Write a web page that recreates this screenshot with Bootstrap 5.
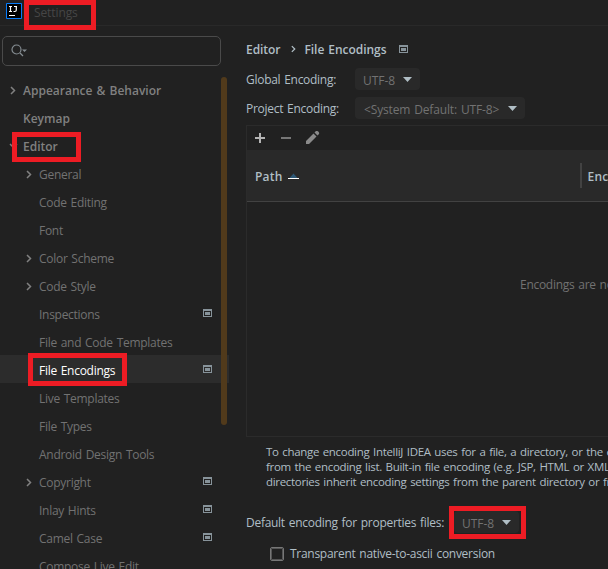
<!DOCTYPE html>
<html lang="en">
<head>
<meta charset="utf-8">
<meta name="viewport" content="width=device-width, initial-scale=1">
<title>Settings</title>
<link href="https://cdn.jsdelivr.net/npm/bootstrap@5.3.0/dist/css/bootstrap.min.css" rel="stylesheet">
<style>
html,body{height:100%;overflow:hidden}
body{background:#212121;color:#b0bec5;font:12px/16px "Open Sans","Noto Sans",sans-serif;letter-spacing:-.28px;word-spacing:1px;white-space:nowrap}
svg{display:block;flex:none}
.window{width:608px;height:569px;overflow:hidden}
.titlebar{height:26px;border-bottom:1px solid #292929;color:#464646;padding-left:6px}
.titlebar svg{margin-top:-3px}
.titlebar span{margin-left:12px;letter-spacing:-.1px}
.sidebar{width:229px;flex:none;padding-top:10px}
.search{width:219px;height:30px;margin-left:2px;border:1px solid #4a4a4a;border-radius:5px;padding-left:8px}
.tree{margin-top:9px;color:#727272}
.tree-row{height:28px;padding-right:17px}
.tree-row span{padding-top:3px}
.lvl1{padding-left:9px;font-weight:600;letter-spacing:0;color:#808080}
.lvl2{padding-left:25px}
.tree-row .arrow{width:14px;flex:none;color:#808080;padding:2px 0 0 1px}
.tree-row.selected{background:#2c2c2c;color:#fff}
.scroll-thumb{left:221px;top:77px;width:6px;height:348px;border-radius:3px;background:#513a1b}
.content{padding-left:17px;min-width:0}
.crumbs{height:46px;font-weight:600;letter-spacing:-.05px;margin-bottom:-4px}
.crumbs span{padding-top:2px}
.crumbs .sep{margin:0 8px 0 11px}
.crumbs .scope{margin-left:13px}
.combo{height:22px;background:#292929;border-radius:4px;color:#727272;padding:0 8px;flex:none;letter-spacing:-.05px}
.combo span{padding-top:3px}
.combo-sm{width:65px}
.combo-lg{width:170px;padding-left:9px;letter-spacing:-.15px}
.field{height:22px}
.field-label{width:109px;padding-top:2px}
.encodings{width:500px;height:312px;margin-top:6px;border:1px solid #2b2b2b}
.tools{height:24px;padding-left:8px}
.tools .minus{margin-left:16px}
.tools .pencil{margin-left:15px}
.thead-row{height:52px;background:#292929;border-bottom:1px solid #424242;font-weight:600;letter-spacing:.2px;padding-left:8px}
.thead-row span{padding-top:3px}
.sort{margin:0 0 0 5px}
.divider{width:2px;height:25px;background:#424242;margin:0 6px 0 281px}
.empty{padding:75px 0 0 273px;color:#727272}
.help{margin:7px 0 22px 20px;font-size:11.5px;line-height:15px;letter-spacing:-.32px}
.prop-label{width:208px;padding-top:2px}
.native{margin:13px 0 0 24px}
.check{width:14px;height:14px;border:1px solid #777;outline:1px solid #555;outline-offset:-2px;border-radius:2px;margin-right:6px}
.marker{border:5px solid #ed1c24;pointer-events:none}
.m1{left:24px;top:0;width:72px;height:30px}
.m2{left:12px;top:132px;width:69px;height:30px}
.m3{left:28px;top:353px;width:99px;height:33px}
.m4{left:449px;top:506px;width:77px;height:33px}
</style>
<script src="https://cdn.jsdelivr.net/npm/bootstrap@5.3.0/dist/js/bootstrap.bundle.min.js"></script>
</head>
<body>
<svg class="d-none">
<symbol id="right" viewBox="0 0 6 9"><path d="M1 1l3.5 3.5L1 8" fill="none" stroke="currentColor" stroke-width="1.5"/></symbol>
<symbol id="down" viewBox="0 0 9 6"><path d="M1 1l3.5 3.5L8 1" fill="none" stroke="currentColor" stroke-width="1.5"/></symbol>
<symbol id="proj" viewBox="0 0 9 8"><path d="M0 0h9v8H0zM1 2v5h7V2z" fill="#87939a" fill-rule="evenodd"/><path d="M2 3h5v3H2z" fill="#87939a"/></symbol>
<symbol id="tri" viewBox="0 0 9 5"><path d="M0 0h9L4.5 5z" fill="#b0bec5"/></symbol>
</svg>
<div class="window position-relative">
<header class="titlebar d-flex align-items-center">
<svg width="16" height="16"><path d="M.5.5h15v15H.5z" fill="#000" stroke="#087cfa"/><path d="M3 3.5h3M4.5 3.5v5M3 8.500h3M8 3.500h3M10.300 3.500v3.500q0 1.500-1.500 1.500H7.500M3 12.500h6" fill="none" stroke="#fff" stroke-width="1.200"/></svg>
<span>Settings</span>
</header>
<div class="d-flex">
<aside class="sidebar">
<div class="search d-flex align-items-center"><svg width="17" height="14" fill="none" stroke="#858d92" stroke-width="1.200"><circle cx="5.500" cy="5.500" r="4.500"/><path d="M9 9l3 3"/><path d="M11 5.500h5L13.500 8z" fill="#858d92" stroke="none"/></svg></div>
<div class="tree">
<div class="tree-row lvl1 d-flex align-items-center"><span class="arrow"><svg width="6" height="9"><use href="#right"/></svg></span><span>Appearance &amp; Behavior</span></div>
<div class="tree-row lvl1 d-flex align-items-center"><span class="arrow"></span><span>Keymap</span></div>
<div class="tree-row lvl1 d-flex align-items-center"><span class="arrow ps-0"><svg width="9" height="6"><use href="#down"/></svg></span><span>Editor</span></div>
<div class="tree-row lvl2 d-flex align-items-center"><span class="arrow"><svg width="6" height="9"><use href="#right"/></svg></span><span>General</span></div>
<div class="tree-row lvl2 d-flex align-items-center"><span class="arrow"></span><span>Code Editing</span></div>
<div class="tree-row lvl2 d-flex align-items-center"><span class="arrow"></span><span>Font</span></div>
<div class="tree-row lvl2 d-flex align-items-center"><span class="arrow"><svg width="6" height="9"><use href="#right"/></svg></span><span>Color Scheme</span></div>
<div class="tree-row lvl2 d-flex align-items-center"><span class="arrow"><svg width="6" height="9"><use href="#right"/></svg></span><span>Code Style</span></div>
<div class="tree-row lvl2 d-flex align-items-center"><span class="arrow"></span><span>Inspections</span><svg class="ms-auto" width="9" height="8"><use href="#proj"/></svg></div>
<div class="tree-row lvl2 d-flex align-items-center"><span class="arrow"></span><span>File and Code Templates</span></div>
<div class="tree-row lvl2 selected d-flex align-items-center"><span class="arrow"></span><span>File Encodings</span><svg class="ms-auto" width="9" height="8"><use href="#proj"/></svg></div>
<div class="tree-row lvl2 d-flex align-items-center"><span class="arrow"></span><span>Live Templates</span></div>
<div class="tree-row lvl2 d-flex align-items-center"><span class="arrow"></span><span>File Types</span></div>
<div class="tree-row lvl2 d-flex align-items-center"><span class="arrow"></span><span>Android Design Tools</span></div>
<div class="tree-row lvl2 d-flex align-items-center"><span class="arrow"><svg width="6" height="9"><use href="#right"/></svg></span><span>Copyright</span><svg class="ms-auto" width="9" height="8"><use href="#proj"/></svg></div>
<div class="tree-row lvl2 d-flex align-items-center"><span class="arrow"></span><span>Inlay Hints</span><svg class="ms-auto" width="9" height="8"><use href="#proj"/></svg></div>
<div class="tree-row lvl2 d-flex align-items-center"><span class="arrow"></span><span>Camel Case</span><svg class="ms-auto" width="9" height="8"><use href="#proj"/></svg></div>
<div class="tree-row lvl2 d-flex align-items-center"><span class="arrow"></span><span>Compose Live Edit</span></div>
</div>
</aside>
<main class="content">
<div class="crumbs d-flex align-items-center"><span>Editor</span><svg class="sep" width="5" height="8"><use href="#right"/></svg><span>File Encodings</span><svg class="scope" width="9" height="8"><use href="#proj"/></svg></div>
<div class="field d-flex align-items-center"><span class="field-label">Global Encoding:</span><div class="combo combo-sm d-flex align-items-center justify-content-between"><span>UTF-8</span><svg width="9" height="5"><use href="#tri"/></svg></div></div>
<div class="field d-flex align-items-center" style="margin-top:7px"><span class="field-label">Project Encoding:</span><div class="combo combo-lg d-flex align-items-center justify-content-between"><span>&lt;System Default: UTF-8&gt;</span><svg width="9" height="5"><use href="#tri"/></svg></div></div>
<section class="encodings">
<div class="tools d-flex align-items-center">
<svg width="10" height="10"><path d="M0 5h10M5 0v10" stroke="#b4b4b4" stroke-width="2"/></svg>
<svg class="minus" width="10" height="10"><path d="M0 5h10" stroke="#777" stroke-width="2"/></svg>
<svg class="pencil" width="14" height="14" fill="#8a8a8a"><path d="M0 13v-3l7.500-7.500 3 3L3 13zM8.500 1.500L10 0q1.500-.3 2.500.7T13 3l-1.500 1.500z"/></svg>
</div>
<div class="thead-row d-flex align-items-center"><span>Path</span><svg class="sort" width="11" height="6"><path d="M1.500 5l4-4.500 4 4.500z" fill="#2d5775"/><path d="M0 5.500h11" stroke="#fff"/></svg><div class="divider"></div><span>Encoding</span></div>
<div class="empty">Encodings are not configured</div>
</section>
<div class="help"><div>To change encoding IntelliJ IDEA uses for a file, a directory, or the entire project</div><div>from the encoding list. Built-in file encoding (e.g. JSP, HTML or XML)</div><div>directories inherit encoding settings from the parent directory or from</div></div>
<div class="field d-flex align-items-center"><span class="prop-label">Default encoding for properties files:</span><div class="combo combo-sm d-flex align-items-center justify-content-between"><span>UTF-8</span><svg width="9" height="5"><use href="#tri"/></svg></div></div>
<div class="native d-flex align-items-center"><div class="check"></div><span>Transparent native-to-ascii conversion</span></div>
</main>
</div>
<div class="scroll-thumb position-absolute"></div>
<div class="marker m1 position-absolute"></div>
<div class="marker m2 position-absolute"></div>
<div class="marker m3 position-absolute"></div>
<div class="marker m4 position-absolute"></div>
</div>
</body>
</html>
